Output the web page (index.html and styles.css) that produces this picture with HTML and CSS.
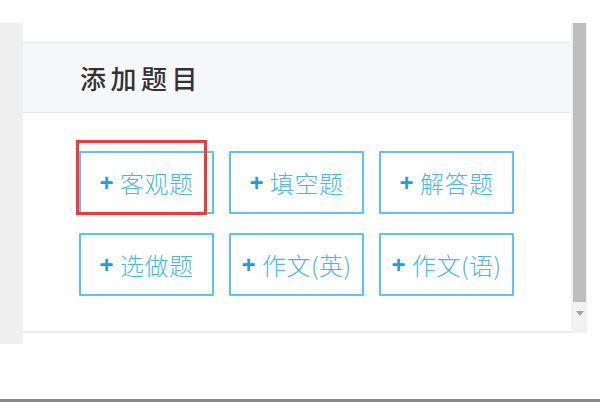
FILE: index.html
```html
<!DOCTYPE html>
<html lang="zh-CN">
<head>
    <meta charset="UTF-8">
    <meta name="viewport" content="width=device-width, initial-scale=1.0">
    <title>添加题目</title>
    <link rel="stylesheet" href="styles.css">
</head>
<body>
<div class="page">
    <div class="frame">
        <div class="side"></div>

        <div class="panel">
            <div class="panel-top"></div>
            <div class="panel-head">
                <h2 class="panel-title">添加题目</h2>
            </div>
            <div class="panel-body">
                <div class="btn-grid">
                    <button class="add-btn is-marked"><span class="plus">+</span>客观题<span class="mark"></span></button>
                    <button class="add-btn"><span class="plus">+</span>填空题</button>
                    <button class="add-btn"><span class="plus">+</span>解答题</button>
                    <button class="add-btn"><span class="plus">+</span>选做题</button>
                    <button class="add-btn"><span class="plus">+</span>作文(英)</button>
                    <button class="add-btn"><span class="plus">+</span>作文(语)</button>
                </div>
            </div>
        </div>

        <div class="scrollbar">
            <div class="thumb"></div>
            <div class="arrow"></div>
        </div>
    </div>
</div>
<div class="bottom-bar"></div>
</body>
</html>
```

FILE: styles.css
```css
html, body { margin: 0; padding: 0; }
body {
    width: 600px;
    height: 402px;
    overflow: hidden;
    background: #fff;
    font-family: "Noto Sans CJK SC", "Noto Sans", sans-serif;
}

.page {
    height: 399px;
    padding-top: 23px;
    box-sizing: border-box;
}
.frame { display: flex; align-items: flex-start; }

.side {
    width: 23px;
    height: 321px;
    background: #efefef;
}

.panel {
    width: 548px;
    height: 310px;
    display: flex;
    flex-direction: column;
    background: #fff;
    border-bottom: 2px solid #ebecee;
    box-sizing: border-box;
}
.panel-top { height: 19px; }
.panel-head {
    height: 71px;
    box-sizing: border-box;
    background: #f6f7f9;
    border-top: 1px solid #e6e8eb;
    border-bottom: 1px solid #e6e8eb;
    display: flex;
    align-items: center;
    padding-left: 57px;
}
.panel-title {
    margin: 0;
    font-size: 26px;
    font-weight: 500;
    letter-spacing: 4.5px;
    color: #333;
}

.panel-body { padding: 38px 0 0 56px; }
.btn-grid {
    display: grid;
    grid-template-columns: repeat(3, 135px);
    column-gap: 15px;
    row-gap: 19px;
}

.add-btn {
    position: relative;
    height: 63px;
    padding: 0;
    background: #fff;
    border: 2px solid #5cc3f8;
    border-radius: 1px;
    color: #4ab6f2;
    font-family: inherit;
    font-size: 24px;
    font-weight: 300;
    letter-spacing: 0.5px;
    display: flex;
    align-items: center;
    justify-content: center;
    cursor: pointer;
}
.plus {
    font-family: "Liberation Sans", sans-serif;
    font-weight: bold;
    font-size: 24px;
    color: #1d9de8;
    margin-right: 6px;
}

/* red highlight box drawn over the first button */
.mark {
    position: absolute;
    left: -5px;
    top: -13px;
    width: 131px;
    height: 75px;
    box-sizing: border-box;
    border: 3px solid #ff3535;
}

.scrollbar {
    width: 16px;
    height: 310px;
    background: #f1f1f1;
    display: flex;
    flex-direction: column;
    align-items: flex-end;
}
.thumb {
    width: 13px;
    height: 279px;
    margin-right: 1px;
    background: #bdbdbd;
}
.arrow {
    margin: 9px 3px 0 0;
    width: 0;
    height: 0;
    border-left: 4px solid transparent;
    border-right: 4px solid transparent;
    border-top: 5px solid #a3a3a3;
}

.bottom-bar {
    height: 3px;
    background: #8a8a8a;
}
```
